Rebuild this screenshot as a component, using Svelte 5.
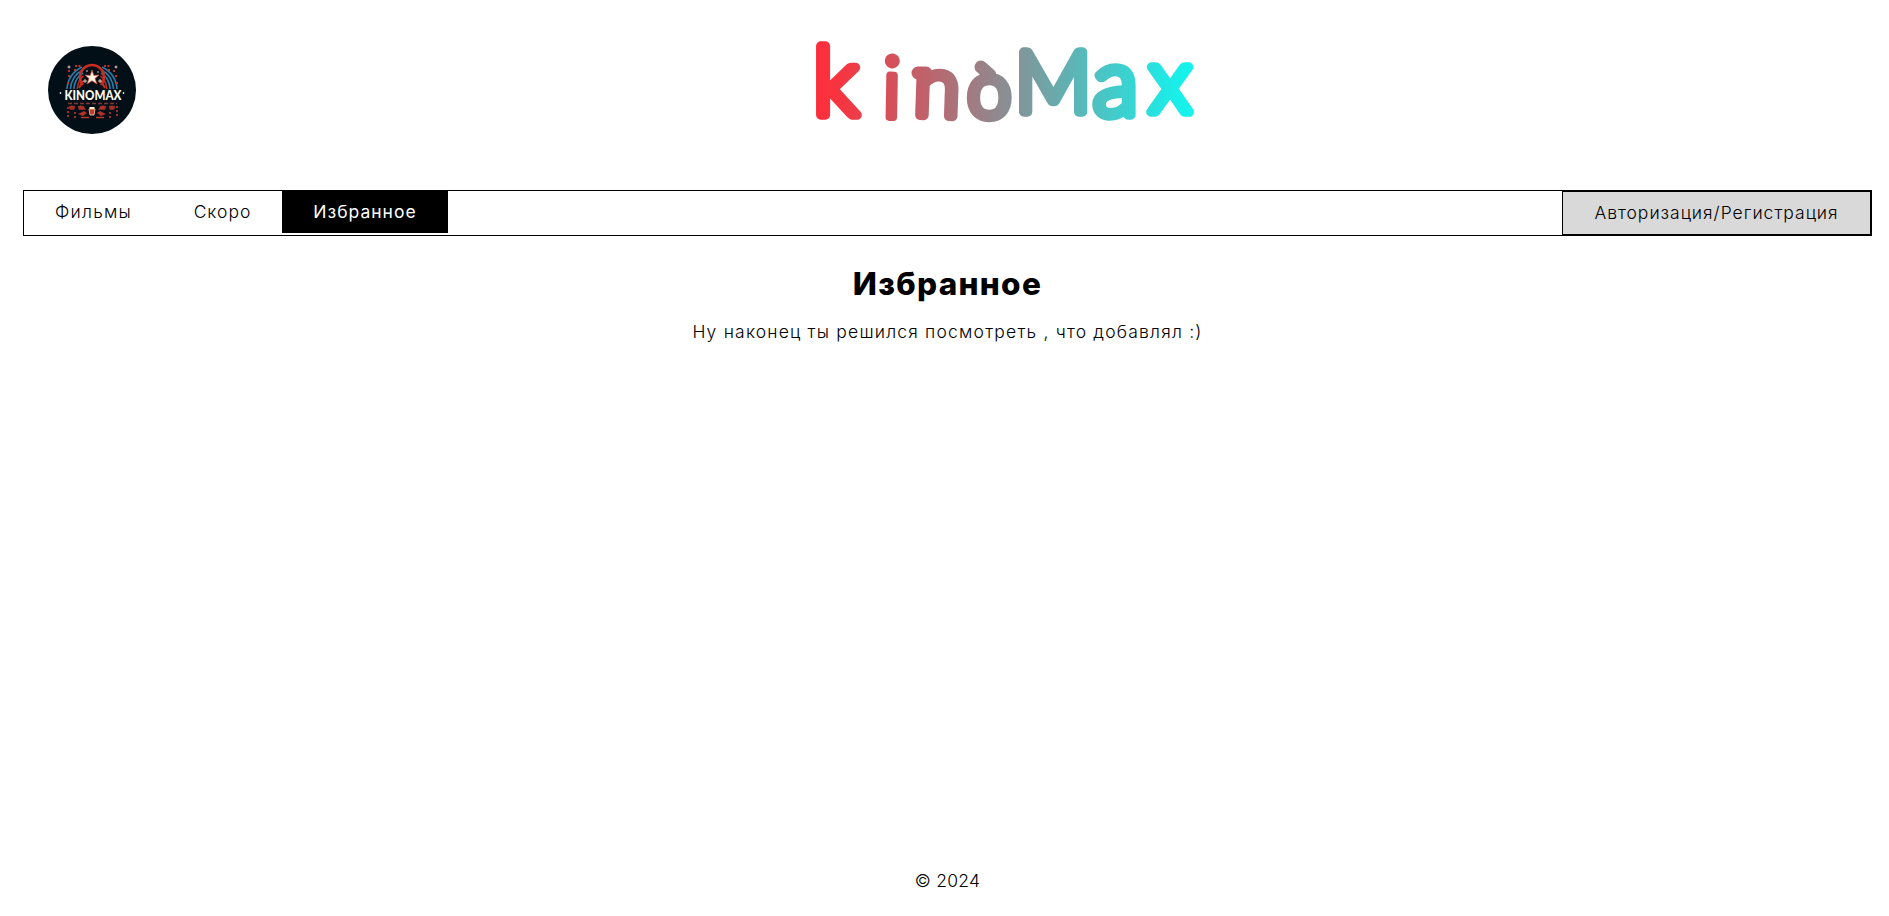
<script>
  const links = [
    { label: 'Фильмы', width: 139, spacing: 1.2, active: false },
    { label: 'Скоро', width: 119, spacing: 1, active: false },
    { label: 'Избранное', width: 166, spacing: 1, active: true }
  ];
  const arcs = [0, 1, 2, 3];
  const seats = [24, 33, 55, 64];
</script>

<div class="page">
  <header>
    <svg class="emblem" width="88" height="88" viewBox="0 0 88 88">
      <circle cx="44" cy="44" r="44" fill="#020f17" />
      <g fill="none" stroke-width="1.6">
        {#each arcs as i}
          <path d="M{19 + i * 3.4} 43Q{20 + i * 3.4} {28 + i * 2} {34 + i * .5} {21 + i * 3}" stroke={i < 3 ? '#287fac' : '#b52b22'} />
          <path d="M{69 - i * 3.4} 43Q{68 - i * 3.4} {28 + i * 2} {54 - i * .5} {21 + i * 3}" stroke={i < 3 ? '#287fac' : '#b52b22'} />
        {/each}
        <path d="M35 39A12 12 0 1 1 53 39" stroke="#c82d20" stroke-width="2.6" />
        <path d="M31 42L35 35M57 42L53 35" stroke="#c82d20" stroke-width="2" />
      </g>
      <path d="M44 24L45.8 29.4L51 29L47 32.5L49 38L44 34.8L39 38L41 32.5L37 29L42.2 29.4Z" fill="#fff0e4" stroke="#db4935" stroke-width=".7" />
      <path d="M37 33v4M35 35h4M52 33v4M50 35h4M39 24v2M50 25v2M21 19.5v3M19.5 21h3M68 19.5v3M66.5 21h3" stroke="#f4d9cf" stroke-width=".9" />
      <path d="M27 20h6M56 20h6M20 25h3M26 24h2M60 24h2M65 25h3M20 30h2M67 30h2M19 37h2M68 37h2" stroke="#bb3029" stroke-width="1.8" stroke-dasharray="2 1.5" />
      <text x="16.5" y="53.5" textLength="57" lengthAdjust="spacingAndGlyphs" class="emblem-name">KINOMAX</text>
      <circle cx="12.5" cy="47" r=".9" fill="#ddd" /><circle cx="75.5" cy="47" r=".9" fill="#ddd" />
      <path d="M20 57.5H69" stroke="#7d3a34" stroke-width="1.3" stroke-dasharray="4 2" />
      <g fill="#a52b24" stroke="#c95042" stroke-width=".3">
        {#each seats as x}
          <path d="M{x - 3} 60.5q3 -1.5 6 0l-1 3h-4z" />
        {/each}
      </g>
      <path d="M30 68l6-3 3 2-4 3zM58 68l-6-3-3 2 4 3zM31 60l5 1 2 3-5-1zM57 60l-5 1-2 3 5-1z" fill="#b13128" />
      <path d="M41 63h6l-1 6h-4z" fill="#c53829" stroke="#f2d4a0" stroke-width=".8" />
      <path d="M41.5 62h5" stroke="#fff0c8" stroke-width="2" />
      <path d="M20 61v11M27 66v6M62 66v6M69 60v12" stroke="#963029" stroke-width="2" stroke-dasharray="2 2" />
      <path d="M33 71.5h8M48 71.5h8" stroke="#ba352a" stroke-width="1.6" />
    </svg>
    <svg class="wordmark" width="420" height="160" viewBox="794 0 420 160">
      <defs>
        <linearGradient id="brand" gradientUnits="userSpaceOnUse" x1="814" y1="0" x2="1195" y2="0">
          <stop offset="0" stop-color="#ff2e3d" />
          <stop offset=".06" stop-color="#f8333f" />
          <stop offset=".5" stop-color="#8b8d92" />
          <stop offset=".93" stop-color="#1eeae6" />
          <stop offset="1" stop-color="#12f5ed" />
        </linearGradient>
      </defs>
      <text fill="url(#brand)" stroke="url(#brand)"><tspan x="813" y="115" font-size="95">k</tspan><tspan x="882" y="117" rotate="1" font-size="84" stroke-width="7.5">i</tspan><tspan x="913" y="115" rotate="2" font-size="84">n</tspan><tspan x="967.5" y="117" font-size="78">o</tspan><tspan x="1015" y="112" font-size="84">M</tspan><tspan x="1093" y="115" font-size="93">a</tspan><tspan x="1149" y="112" font-size="90">x</tspan></text>
      <path d="M918 73L926 73M981 67L990 75" stroke="url(#brand)" stroke-width="13" stroke-linecap="round" />
    </svg>
  </header>

  <nav>
    {#each links as link}
      <a class:active={link.active} style="width: {link.width}px; letter-spacing: {link.spacing}px">{link.label}</a>
    {/each}
    <button>Авторизация/Регистрация</button>
  </nav>

  <main>
    <h1>Избранное</h1>
    <p>Ну наконец ты решился посмотреть , что добавлял :)</p>
  </main>
  <footer>© 2024</footer>
</div>

<style>
  :global(body) { margin: 0; background: #fff; }
  .page { box-sizing: border-box; height: 916px; padding: 0 17px 0 23px; display: flex; flex-direction: column; font-family: Inter, "Noto Sans", sans-serif; font-size: 17.5px; font-weight: 300; color: #000; }
  header { height: 190px; flex: none; display: flex; align-items: flex-start; }
  .emblem { margin: 46px 0 0 25px; }
  .emblem-name { font: 900 13.5px Lato, sans-serif; fill: #fffaf0; }
  .wordmark { margin-left: 658px; }
  .wordmark text { font-family: Lato, sans-serif; font-weight: 300; stroke-width: 9.5; stroke-linejoin: round; stroke-linecap: round; }
  nav { height: 46px; flex: none; box-sizing: border-box; border: 1px solid #000; display: flex; align-items: flex-start; }
  nav a { height: 42px; line-height: 42px; text-align: center; }
  nav .active { background: #000; color: #fff; font-weight: 400; }
  button { box-sizing: border-box; width: 309px; height: 44px; margin-left: auto; padding: 0 0 1px; border: 1px solid #000; background: #d9d9d9; font: inherit; color: #000; letter-spacing: 1px; }
  main { flex: 1; text-align: center; }
  h1 { margin: 28px 0 0; font-size: 31.5px; line-height: 40px; font-weight: 800; letter-spacing: 1.3px; }
  p { margin: 16px 0 0; line-height: 24px; letter-spacing: 1.2px; }
  footer { height: 47px; line-height: 24px; text-align: center; letter-spacing: .3px; }
</style>
